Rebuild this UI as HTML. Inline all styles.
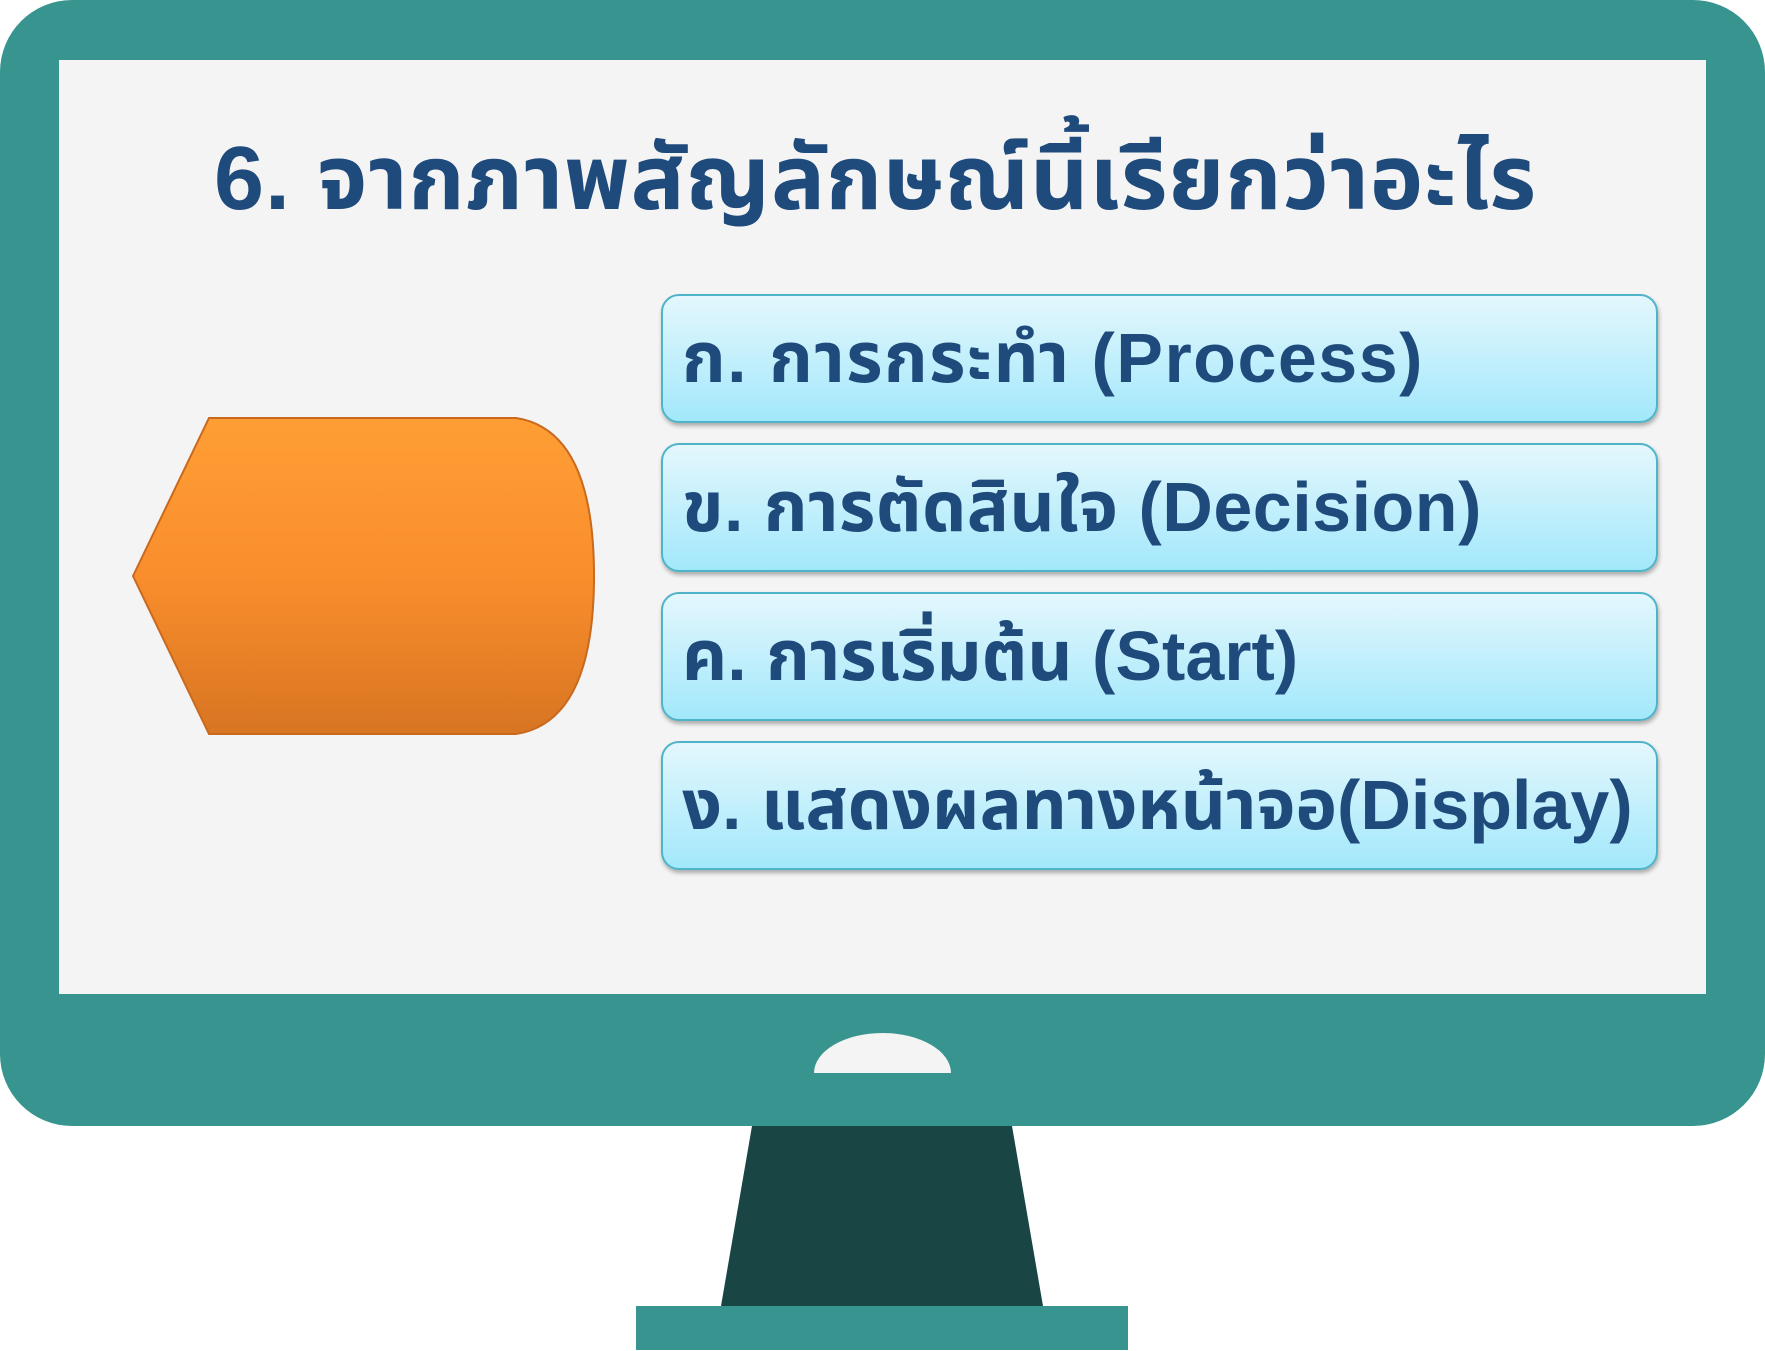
<!DOCTYPE html>
<html><head><meta charset="utf-8"><style>
html,body{margin:0;padding:0;width:1765px;height:1351px;background:#fff;overflow:hidden;position:relative;font-family:"Liberation Sans","Noto Sans Thai","Loma",sans-serif}
.mon{position:absolute;left:0;top:0;width:1765px;height:1126px;background:#37948e;border-radius:72px}
.scr{position:absolute;left:59px;top:60px;width:1647px;height:934px;background:#f4f4f4}
.bump{position:absolute;left:814px;top:1033px;width:137px;height:80px;background:#f4f4f4;border-radius:50%;clip-path:inset(0 0 50% 0)}
.title{position:absolute;left:214px;top:114px;font-size:90px;letter-spacing:1px;font-weight:bold;color:#1f4a7c;white-space:nowrap}
.opt{position:absolute;left:661px;width:997px;height:129px;box-sizing:border-box;border:2px solid #4fb3c9;border-radius:18px;background:linear-gradient(#e4f7fd,#a2e8fb);box-shadow:1px 3px 4px rgba(0,0,0,.3);font-size:70px;font-weight:bold;color:#1f4a7c;padding-left:19px;line-height:125px;white-space:nowrap}
</style></head><body>
<div class="mon"></div>
<div class="scr"></div>
<div class="bump"></div>
<svg style="position:absolute;left:0;top:0" width="1765" height="1351">
<defs><linearGradient id="g" x1="0" y1="0" x2="0" y2="1"><stop offset="0" stop-color="#ff9e35"/><stop offset=".5" stop-color="#f98e2c"/><stop offset="1" stop-color="#d87522"/></linearGradient></defs>
<polygon points="752,1126 1012,1126 1043,1306 721,1306" fill="#1a4545"/>
<rect x="636" y="1306" width="492" height="44" fill="#37948e"/>
<path d="M133,576 L209,418 L516,418 Q594,430 594,576 Q594,722 516,734 L209,734 Z" fill="url(#g)" stroke="#c9691e" stroke-width="2"/>
</svg>
<div class="title">6. จากภาพสัญลักษณ์นี้เรียกว่าอะไร</div>
<div class="opt" style="top:294px;letter-spacing:1.5px">ก. การกระทำ (Process)</div>
<div class="opt" style="top:443px;letter-spacing:0.5px">ข. การตัดสินใจ (Decision)</div>
<div class="opt" style="top:592px">ค. การเริ่มต้น (Start)</div>
<div class="opt" style="top:741px">ง. แสดงผลทางหน้าจอ(Display)</div>
</body></html>
